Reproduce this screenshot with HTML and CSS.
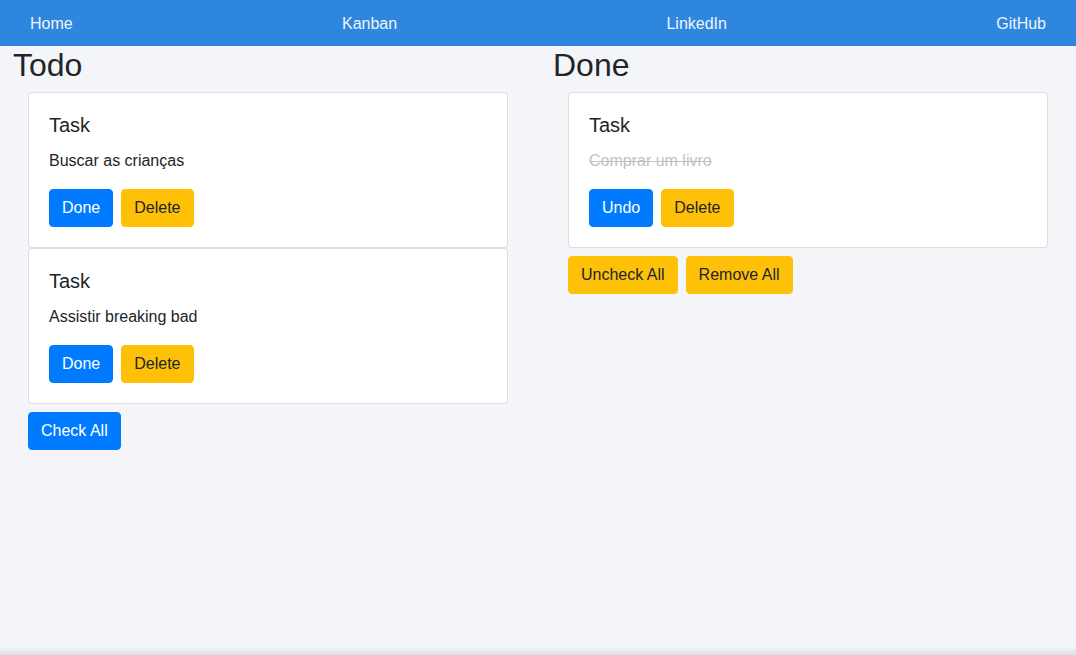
FILE: index.html
```html
<!DOCTYPE html>
<html lang="pt">
<head>
<meta charset="utf-8">
<title>Kanban</title>
<link rel="stylesheet" href="styles.css">
</head>
<body>
<nav class="navbar">
  <a class="nav-link" href="#">Home</a>
  <a class="nav-link" href="#">Kanban</a>
  <a class="nav-link" href="#">LinkedIn</a>
  <a class="nav-link" href="#">GitHub</a>
</nav>
<main class="board">
  <section class="column">
    <h2 class="column-title">Todo</h2>
    <div class="column-body">
      <div class="card">
        <h5 class="card-title">Task</h5>
        <p class="card-text">Buscar as crianças</p>
        <div class="actions">
          <button class="btn btn-primary">Done</button>
          <button class="btn btn-warning">Delete</button>
        </div>
      </div>
      <div class="card">
        <h5 class="card-title">Task</h5>
        <p class="card-text">Assistir breaking bad</p>
        <div class="actions">
          <button class="btn btn-primary">Done</button>
          <button class="btn btn-warning">Delete</button>
        </div>
      </div>
      <div class="bulk">
        <button class="btn btn-primary">Check All</button>
      </div>
    </div>
  </section>
  <section class="column">
    <h2 class="column-title">Done</h2>
    <div class="column-body">
      <div class="card">
        <h5 class="card-title">Task</h5>
        <p class="card-text done">Comprar um livro</p>
        <div class="actions">
          <button class="btn btn-primary">Undo</button>
          <button class="btn btn-warning">Delete</button>
        </div>
      </div>
      <div class="bulk">
        <button class="btn btn-warning">Uncheck All</button>
        <button class="btn btn-warning">Remove All</button>
      </div>
    </div>
  </section>
</main>
</body>
</html>
```
FILE: styles.css
```css
* { box-sizing: border-box; }

html, body { margin: 0; padding: 0; }

body {
  min-height: 100vh;
  font-family: "Liberation Sans", Arial, sans-serif;
  font-size: 16px;
  line-height: 1.5;
  color: #212529;
  background: linear-gradient(to bottom, #f4f5f9 0, #f4f5f9 calc(100% - 8px), #dedfe3 100%);
}

.navbar {
  height: 46px;
  background: #2e86de;
  display: flex;
  justify-content: space-between;
  align-items: center;
  padding: 1px 30px 0;
}

.nav-link {
  color: #eef4fb;
  text-decoration: none;
  font-size: 16px;
}

.board {
  display: grid;
  grid-template-columns: 540px 536px;
}

.column {
  padding-left: 13px;
}

.column-title {
  margin: 0;
  font-size: 32px;
  font-weight: 400;
  line-height: 1.2;
}

.column-body {
  margin: 8px 0 0 15px;
  width: 480px;
}

.card {
  background: #fff;
  border: 1px solid rgba(0, 0, 0, 0.125);
  border-radius: 4px;
  padding: 20px;
}

.card-title {
  margin: 0 0 12px;
  font-size: 20px;
  font-weight: 400;
  line-height: 1.2;
}

.card-text {
  margin: 0 0 16px;
}

.card-text.done {
  color: #c2c2c2;
  text-decoration: line-through;
}

.actions, .bulk {
  display: flex;
  gap: 8px;
}

.bulk {
  margin-top: 8px;
}

.btn {
  font-family: inherit;
  font-size: 16px;
  line-height: 1.5;
  padding: 6px 12px;
  border: 1px solid transparent;
  border-radius: 4px;
  cursor: pointer;
}

.btn-primary {
  background: #007bff;
  border-color: #007bff;
  color: #fff;
}

.btn-warning {
  background: #ffc107;
  border-color: #ffc107;
  color: #212529;
}
```
